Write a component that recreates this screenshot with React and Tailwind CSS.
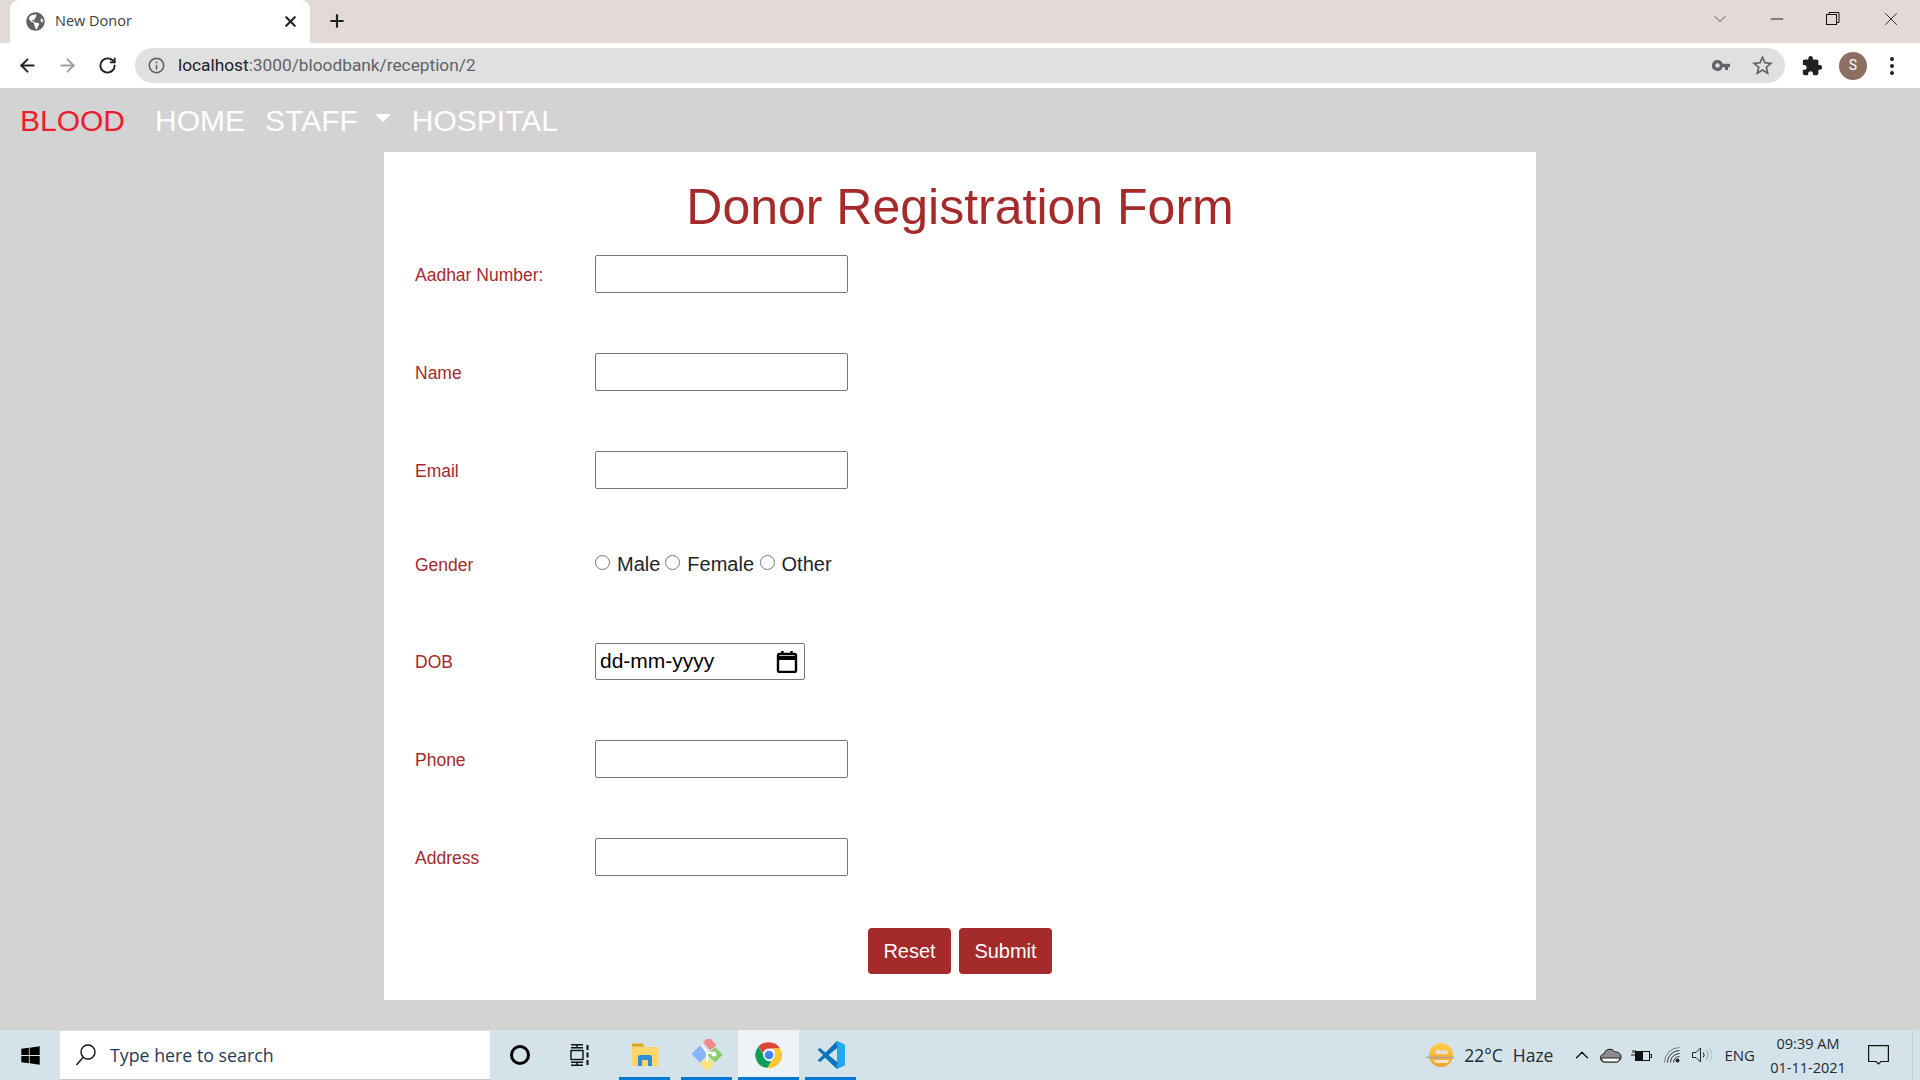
import { ArrowLeft, ArrowRight, RotateCw, Plus, X, ChevronDown, ChevronUp, Minus } from 'lucide-react';
import { FaGlobeAmericas, FaWindows } from 'react-icons/fa';
import { MdExtension, MdInfoOutline, MdStarBorder } from 'react-icons/md';

const arial = 'font-["Liberation_Sans",Arial,sans-serif]';

function FormRow({ label, className = '' }) {
  return (
    <div className={`flex items-center ${className}`}>
      <label className="w-[180px] pt-[2px] text-[17.5px] text-[#a52a2a]">{label}</label>
      <input type="text" className="w-[253px] h-[38px] bg-white border border-[#767676] rounded-[2px]" />
    </div>
  );
}

function Radio({ label, className = '' }) {
  return (
    <label className={`flex items-center ${className}`}>
      <input type="radio" name="gender" className="w-[15px] h-[15px] m-0 mr-[7px] -translate-y-[2px]" />
      <span className="text-[20px] leading-[24px] text-[#212529]">{label}</span>
    </label>
  );
}

function FolderIcon() {
  return (
    <svg width="28" height="24" viewBox="0 0 28 24">
      <path d="M1 2a1.500 1.500 0 0 1 1.500-1.500h9l2 3H1z" fill="#e2a300" />
      <path d="M1 4h25.500a1 1 0 0 1 1 1v17a1 1 0 0 1-1 1H2a1 1 0 0 1-1-1z" fill="#ffd766" />
      <path d="M7 23v-9a2 2 0 0 1 2-2h10a2 2 0 0 1 2 2v9h-4v-6h-6v6z" fill="#2f8fdd" />
    </svg>
  );
}

function KrakenIcon() {
  return (
    <svg width="32" height="32" viewBox="0 0 32 32">
      <rect x="15" y="-1" width="8" height="11" rx="1" fill="#f58a8a" transform="rotate(-40 19 5)" />
      <rect x="3" y="9" width="12" height="12" rx="1" fill="#86b4fb" transform="rotate(45 9 15)" />
      <rect x="19" y="10" width="11" height="11" rx="1" fill="#8bcf6a" transform="rotate(45 24 15)" />
      <rect x="11" y="20" width="10" height="10" rx="1" fill="#ffe27a" transform="rotate(45 16 25)" />
      <path d="M11 6 L16 14 L16 23 M16 14 L21 14" stroke="#fff" strokeWidth="2" fill="none" />
      <circle cx="23" cy="15" r="2.500" fill="#fff" />
    </svg>
  );
}

function ChromeIcon() {
  return (
    <svg width="28" height="28" viewBox="0 0 48 48">
      <path d="M24 2a22 22 0 0 1 19 11H24a11 11 0 0 0-10.500 8L6 9.500A22 22 0 0 1 24 2z" fill="#db4437" />
      <path d="M6 9.500 L15 25a11 11 0 0 0 13.500 9.500L21.500 46A22 22 0 0 1 6 9.500z" fill="#0f9d58" />
      <path d="M43 13a22 22 0 0 1-21.500 33L31 30a11 11 0 0 0-1-17z" fill="#fdc72f" />
      <circle cx="24" cy="24" r="10" fill="#fff" />
      <circle cx="24" cy="24" r="7.500" fill="#4285f4" />
    </svg>
  );
}

function VsCodeIcon() {
  return (
    <svg width="30" height="30" viewBox="0 0 30 30">
      <path d="M21 1 L29 5 V25 L21 29 L7 16 L21 1 Z M21 8 L12 15 L21 22 Z" fill="#0e8ad6" fillRule="evenodd" />
      <path d="M21 1 L29 5 V25 L21 29 Z" fill="#23a9f2" />
      <path d="M1.500 9.500 L4 8 L22 23 L20 28 Z" fill="#0a75be" />
      <path d="M1.500 20.500 L4 22 L22 7 L20 2 Z" fill="#0a75be" />
    </svg>
  );
}

function WeatherIcon() {
  return (
    <svg width="30" height="28" viewBox="0 0 30 28">
      <defs>
        <linearGradient id="sun" x1="0" y1="0" x2="0" y2="1">
          <stop offset="0" stopColor="#fbd24a" />
          <stop offset="1" stopColor="#f59e2c" />
        </linearGradient>
      </defs>
      <circle cx="15" cy="14" r="12" fill="url(#sun)" />
      <path d="M9 13a4 4 0 0 1 7-3 3.500 3.500 0 0 1 6 3H9z" fill="#e9dfd0" />
      <path d="M0 16.500h28" stroke="#a8a39a" strokeWidth="1.500" />
      <path d="M7 19h16a2.500 2.500 0 0 1-3 3H10z" fill="#f3e3c7" />
    </svg>
  );
}

function TaskIcon({ children, width = 'w-[51px]', on = true, active = false, className = '' }) {
  return (
    <div className={`relative h-full flex items-center justify-center ${width} ${active ? 'bg-[#edf3f6]' : ''} ${className}`}>
      {children}
      {on && <div className="absolute bottom-0 left-0 right-0 h-[3px] bg-[#0078d4]" />}
    </div>
  );
}

export default function App() {
  return (
    <div className={`w-[1920px] h-[1080px] overflow-hidden flex flex-col bg-[#d3d3d3] ${arial}`}>
      {/* window title bar + tab */}
      <div className="h-[43px] bg-[#e3dad8] flex items-end pl-[10px]">
        <div className="w-[300px] h-[43px] bg-white rounded-t-[9px] flex items-center pl-[16px] pr-[11px] font-['Open_Sans',sans-serif] text-[14.5px] text-[#3c4043]">
          <FaGlobeAmericas size={19} className="text-[#5f6368] mr-[10px]" />
          <span className="flex-1 -translate-y-px">New Donor</span>
          <X size={17} strokeWidth={3} className="text-[#202124]" />
        </div>
        <Plus size={20} strokeWidth={2.6} className="text-[#202124] ml-[17px] mb-[12px]" />
        <div className="flex-1 h-full flex items-center justify-end pb-[6px]">
          <ChevronDown size={20} strokeWidth={1} className="text-[#333] mr-[37px]" />
          <Minus size={20} strokeWidth={1} className="text-black mr-[39px]" />
          <svg width="14" height="14" viewBox="0 0 14 14" className="mr-[40px]" fill="none" stroke="#111" strokeWidth="1">
            <rect x="0.500" y="2.500" width="10" height="10" />
            <path d="M3 2.500V0.500H13V10.500H10.500" />
          </svg>
          <X size={22} strokeWidth={1} className="text-[#222] mr-[18px]" />
        </div>
      </div>

      {/* address bar */}
      <div className="h-[45px] bg-white flex items-center">
        <ArrowLeft size={21} strokeWidth={2.2} className="text-[#202124] ml-[17px]" />
        <ArrowRight size={21} strokeWidth={2.2} className="text-[#9aa0a6] ml-[19px]" />
        <RotateCw size={19} strokeWidth={2.4} className="text-[#202124] ml-[20px]" />
        <div className="w-[1650px] h-[35px] ml-[18px] rounded-full bg-[#e0e0e0] flex items-center pl-[12px] pr-[10px] font-['Roboto',sans-serif] text-[17.3px]">
          <MdInfoOutline size={19} className="text-[#5f6368] mr-[12px]" />
          <span className="text-[#202124]">localhost</span>
          <span className="text-[#5f6368]">:3000/bloodbank/reception/2</span>
          <div className="flex-1" />
          <svg width="18" height="11" viewBox="0 0 18 11" className="mr-[20px]" fill="#5f6368">
            <path d="M5.500 0a5.500 5.500 0 0 1 5.200 3.700H18v3.600h-2V10h-3V7.300h-2.300A5.500 5.500 0 1 1 5.500 0zm0 3.200a2.300 2.300 0 1 0 0 4.600 2.300 2.300 0 0 0 0-4.600z" />
          </svg>
          <MdStarBorder size={25} className="text-[#5f6368]" />
        </div>
        <MdExtension size={22} className="text-[#202124] ml-[16px]" />
        <div className="w-[28px] h-[28px] ml-[16px] rounded-full bg-[#8d6e63] text-white text-[14px] flex items-center justify-center font-['Roboto',sans-serif]">S</div>
        <div className="ml-[23px] flex flex-col gap-[3px]">
          <div className="w-[4px] h-[4px] rounded-full bg-[#202124]" />
          <div className="w-[4px] h-[4px] rounded-full bg-[#202124]" />
          <div className="w-[4px] h-[4px] rounded-full bg-[#202124]" />
        </div>
      </div>

      {/* site nav */}
      <nav className="h-[64px] flex items-center pl-[20px] text-[30px] text-white">
        <a className="text-[#ed1c2e]">BLOOD</a>
        <a className="ml-[30px]">HOME</a>
        <a className="ml-[20px]">STAFF</a>
        <div className="ml-[17px] mb-[4px] w-0 h-0 border-x-[8px] border-x-transparent border-t-[8px] border-t-white" />
        <a className="ml-[21px]">HOSPITAL</a>
      </nav>

      {/* form card */}
      <main className="w-[1152px] h-[848px] mx-auto bg-white pl-[31px] shrink-0">
        <h1 className="pt-[28px] -ml-[31px] text-center text-[50px] leading-[54px] text-[#a52a2a]">Donor Registration Form</h1>
        <FormRow label="Aadhar Number:" className="mt-[21px]" />
        <FormRow label="Name" className="mt-[60px]" />
        <FormRow label="Email" className="mt-[60px]" />
        <div className="flex items-center mt-[63px] h-[24px]">
          <span className="w-[180px] pt-[2px] text-[17.5px] text-[#a52a2a]">Gender</span>
          <Radio label="Male" />
          <Radio label="Female" className="ml-[5px]" />
          <Radio label="Other" className="ml-[5.5px]" />
        </div>
        <div className="flex items-center mt-[67px]">
          <span className="w-[180px] pt-[2px] text-[17.5px] text-[#a52a2a]">DOB</span>
          <div className="w-[210px] h-[37px] border border-[#767676] rounded-[2px] flex items-center pl-[4px] pr-[6px] text-[21px] text-black">
            <span className="flex-1 -translate-y-px">dd-mm-yyyy</span>
            <svg width="22" height="23" viewBox="0 0 22 23" fill="none" stroke="#000" strokeWidth="2.400">
              <rect x="2" y="4" width="18" height="18" rx="1.500" />
              <path d="M2 8h18" strokeWidth="4" />
              <path d="M6.500 1v3M15.500 1v3" />
            </svg>
          </div>
        </div>
        <FormRow label="Phone" className="mt-[60px]" />
        <FormRow label="Address" className="mt-[60px]" />
        <div className="flex justify-center gap-[8px] mt-[52px] -ml-[31px]">
          <button className="w-[83px] h-[46px] rounded-[4px] bg-[#a52a2a] text-white text-[20px]">Reset</button>
          <button className="w-[93px] h-[46px] rounded-[4px] bg-[#a52a2a] text-white text-[20px]">Submit</button>
        </div>
      </main>

      <div className="flex-1" />

      {/* windows taskbar */}
      <footer className="h-[50px] shrink-0 bg-[#d4e3ea] flex items-stretch font-['Open_Sans',sans-serif] text-[#1f2a33]">
        <div className="w-[60px] flex items-center justify-center">
          <FaWindows size={21} className="text-black" />
        </div>
        <div className="w-[430px] mt-[1px] bg-white border-b border-[#c8c8c8] flex items-center pl-[15px] text-[17.8px] text-[#1f3a5a]">
          <svg width="22" height="24" viewBox="0 0 22 24" fill="none" stroke="#111" strokeWidth="1.400" className="mr-[13px]">
            <circle cx="13" cy="9" r="7" />
            <path d="M8 14.500L1.500 22" />
          </svg>
          Type here to search
        </div>
        <div className="w-[60px] flex items-center justify-center">
          <div className="w-[20px] h-[20px] rounded-full border-[3px] border-black" />
        </div>
        <div className="w-[60px] flex items-center justify-center ml-[1px]">
          <svg width="22" height="22" viewBox="0 0 22 22" fill="none" stroke="#111" strokeWidth="1.400">
            <path d="M1 0.700h12M1 21.300h12M7 0.700v3M7 21.300v-3M1 3.700h12M1 18.300h12" />
            <rect x="1" y="6.500" width="12" height="9" />
            <path d="M17.500 1v5M17.500 8.500v5M17.500 16v5" strokeWidth="2" />
          </svg>
        </div>
        <TaskIcon className="ml-[8px]"><FolderIcon /></TaskIcon>
        <TaskIcon className="ml-[11px]"><KrakenIcon /></TaskIcon>
        <TaskIcon width="w-[61px]" active className="ml-[6px]"><ChromeIcon /></TaskIcon>
        <TaskIcon className="ml-[6px]"><VsCodeIcon /></TaskIcon>
        <div className="flex-1" />
        <div className="flex items-center mr-[7px]">
          <WeatherIcon />
          <span className="ml-[8px] text-[17.5px]">22°C</span>
          <span className="ml-[10px] text-[17.5px]">Haze</span>
          <ChevronUp size={22} strokeWidth={1.300} className="ml-[18px] text-black" />
          <svg width="22" height="15" viewBox="0 0 22 15" className="ml-[7px]">
            <path d="M5 14a4 4 0 0 1-1-8 6 6 0 0 1 11-2 5 5 0 0 1 2 10z" fill="#8d8d8d" stroke="#222" strokeWidth="1" />
            <path d="M2 10a3 3 0 0 0 3 4h12a4 4 0 0 0 3-4z" fill="#fff" stroke="#222" strokeWidth="1" />
          </svg>
          <svg width="21" height="14" viewBox="0 0 21 14" className="ml-[9px]" fill="none" stroke="#111">
            <rect x="4.500" y="3.500" width="14" height="9" />
            <rect x="5" y="4" width="7" height="8" fill="#111" stroke="none" />
            <path d="M19 6.500h1.500v3H19" />
            <path d="M0 7h5M2 2v3M4 2v3" />
          </svg>
          <svg width="16" height="16" viewBox="0 0 16 16" className="ml-[12px]" fill="none" stroke="#333">
            <path d="M0.500 15.500A15 15 0 0 1 15.500 0.500" opacity="0.600" />
            <path d="M3.500 15.500A12 12 0 0 1 15.500 3.500" />
            <path d="M6.500 15.500A9 9 0 0 1 15.500 6.500" />
            <path d="M9.500 15.500A6 6 0 0 1 15.500 9.500" />
            <circle cx="13.500" cy="13.500" r="2" fill="#222" stroke="none" />
          </svg>
          <svg width="20" height="18" viewBox="0 0 20 18" className="ml-[12px]" fill="none" stroke="#222">
            <path d="M0.500 6.500H4L8.500 2V16L4 11.500H0.500Z" />
            <path d="M11 6.500a3.500 3.500 0 0 1 0 5" />
            <path d="M14 4a7 7 0 0 1 0 10" stroke="#999" />
            <path d="M17 1.500a11 11 0 0 1 0 15" stroke="#bbb" />
          </svg>
          <span className="ml-[12px] text-[15px]">ENG</span>
          <div className="ml-[14px] w-[78px] text-center text-[14.5px] leading-[24px] pt-[1px]">
            <div>09:39 AM</div>
            <div>01-11-2021</div>
          </div>
          <svg width="21" height="20" viewBox="0 0 21 20" className="ml-[21px]" fill="none" stroke="#111" strokeWidth="1.200">
            <path d="M0.600 0.600H20.400V16.500H13L10.500 19L8 16.500H0.600Z" />
          </svg>
          <div className="w-px h-full bg-[#bfd0d9] ml-[23px]" />
        </div>
      </footer>
    </div>
  );
}
